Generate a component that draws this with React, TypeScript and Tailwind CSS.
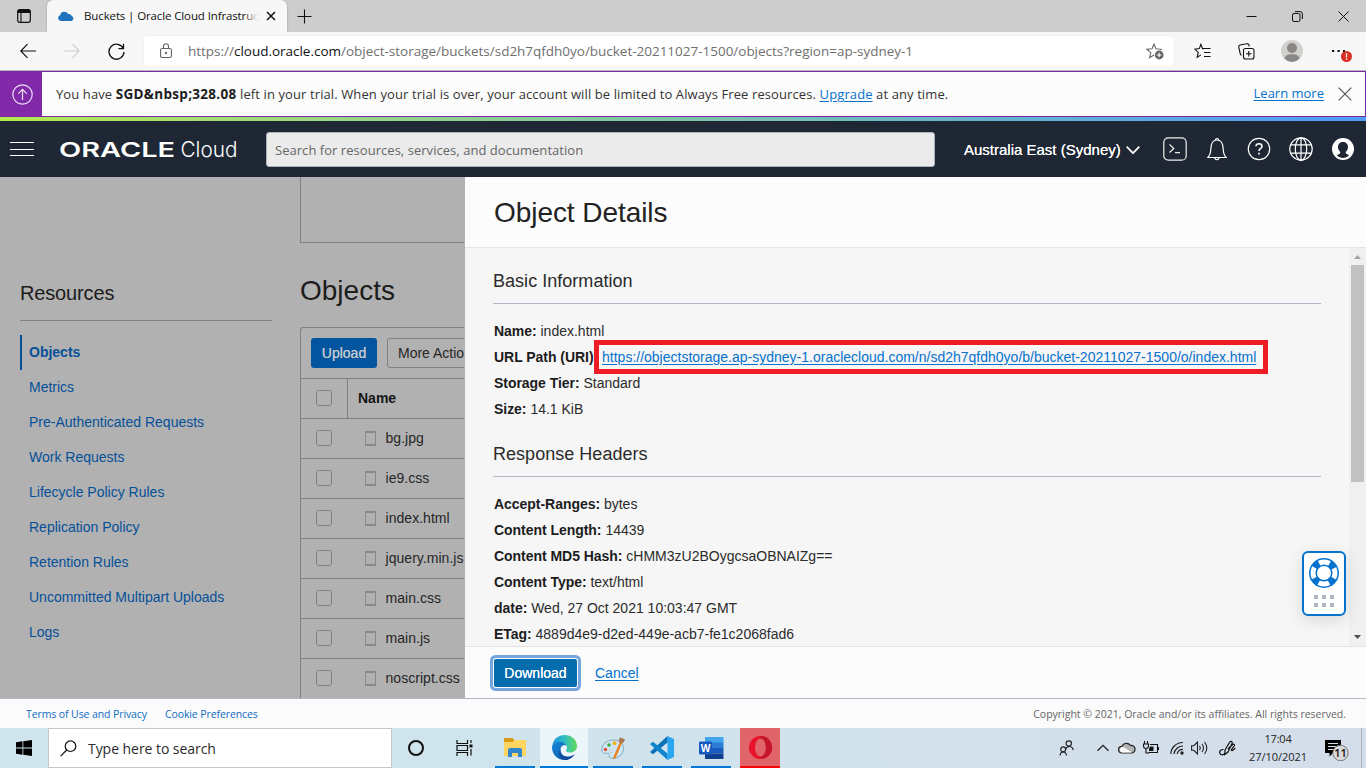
import React from 'react';

const ui = "font-['Open_Sans','Noto_Sans',sans-serif]";
const arial = "font-['Liberation_Sans',Arial,sans-serif]";

function TabStrip() {
  return (
    <div className={`flex h-8 shrink-0 items-center bg-[#cdcdcd] ${ui}`}>
      <svg className="ml-4 shrink-0" width="16" height="16" viewBox="0 0 16 16" fill="none">
        <rect x="1.7" y="1.7" width="12.6" height="12.6" rx="2" stroke="#111" strokeWidth="1.2" />
        <path d="M1.5 5V3.5a2 2 0 0 1 2-2h9a2 2 0 0 1 2 2V5z" fill="#111" />
        <path d="M5 5v9" stroke="#111" strokeWidth="1.1" />
      </svg>
      <div className="ml-[15px] flex h-8 w-60 items-center rounded-t-md bg-[#f7f7f7] pl-[11px] shadow-[0_0_2px_rgba(0,0,0,0.3)]">
        <svg width="16" height="10" viewBox="0 0 16 10" fill="#2273bd">
          <path d="M3 10a3 3 0 0 1-.6-5.9A3.6 3.6 0 0 1 6 .8 4.5 4.5 0 0 1 10.2 3 3 3 0 0 1 13.7 5 2.6 2.6 0 0 1 13.400 10z" />
        </svg>
        <div className="relative ml-[10px] h-4 w-[174px] whitespace-nowrap text-[11.5px] leading-4 tracking-[-0.12px] text-[#111]">
          Buckets | Oracle Cloud Infrastruc
          <div className="absolute top-0 right-0 h-4 w-[14px] bg-linear-to-r from-transparent to-[#f7f7f7]" />
        </div>
        <svg className="ml-[8px]" width="10" height="10" viewBox="0 0 10 10" stroke="#111" strokeWidth="1.5">
          <path d="M1 1l8 8M9 1L1 9" />
        </svg>
      </div>
      <svg className="ml-[10px]" width="15" height="15" viewBox="0 0 15 15" stroke="#111" strokeWidth="1.1">
        <path d="M7.500 .5v14M.5 7.500h14" />
      </svg>
      <div className="mr-[17px] ml-auto flex items-center gap-[35px]">
        <svg width="11" height="11" viewBox="0 0 11 11" stroke="#111">
          <path d="M.5 5.500h10" />
        </svg>
        <svg width="11" height="11" viewBox="0 0 11 11" stroke="#111" fill="none">
          <rect x=".5" y="2.500" width="7.500" height="8" rx="1.500" />
          <path d="M3 .6h5a2.400 2.400 0 0 1 2.400 2.400v5" />
        </svg>
        <svg width="11" height="11" viewBox="0 0 11 11" stroke="#111">
          <path d="M.5.5l10 10M10.500.5l-10 10" />
        </svg>
      </div>
    </div>
  );
}

const starPath = 'M8 1.200l2 4.600 5 .5-3.800 3.300 1.200 5L8 12l-4.400 2.600 1.200-5L1 6.300l5-.5z';

function AddressBar() {
  return (
    <div className={`flex h-[39px] shrink-0 items-center border-b border-[#b5b8b3] bg-[#f7f7f7] ${ui}`}>
      <svg className="ml-5" width="16" height="16" viewBox="0 0 16 16" stroke="#111" strokeWidth="1.200" fill="none">
        <path d="M16 8H.8M7.500 1.200L.8 8l6.700 6.800" />
      </svg>
      <svg className="ml-7" width="16" height="16" viewBox="0 0 16 16" stroke="#ccc" strokeWidth="1.100" fill="none">
        <path d="M0 8h15.200M8.500 1.200L15.200 8l-6.700 6.800" />
      </svg>
      <svg className="ml-7" width="17" height="17" viewBox="0 0 17 17" stroke="#111" strokeWidth="1.300" fill="none">
        <path d="M15.300 5.500A7.500 7.500 0 1 0 16 9M15.500.8v4.900h-5" />
      </svg>
      <div className="ml-[19px] flex h-[30px] w-[1030px] items-center rounded bg-white pl-4 shadow-[0_0_2px_rgba(0,0,0,0.08)]">
        <svg width="12" height="16" viewBox="0 0 12 16" stroke="#666" strokeWidth="1.100" fill="none">
          <rect x=".6" y="5.500" width="10.800" height="9" rx="1.500" />
          <path d="M3.500 5.500V3.200a2.500 2.500 0 0 1 5 0v2.300" />
          <circle cx="6" cy="10" r=".6" fill="#555" />
        </svg>
        <span className="ml-4 whitespace-nowrap text-[13.5px] tracking-[-0.015px] text-[#6f6f6f]">
          https://<span className="text-[#111]">cloud.oracle.com</span>/object-storage/buckets/sd2h7qfdh0yo/bucket-20211027-1500/objects?region=ap-sydney-1
        </span>
        <svg className="mr-[10px] ml-auto" width="18" height="17" viewBox="0 0 18 17" fill="none">
          <path d={starPath} stroke="#666" strokeWidth="1.100" />
          <circle cx="13.200" cy="12" r="5.200" fill="#fff" />
          <circle cx="13.200" cy="12" r="4.400" fill="#666" />
          <path d="M13.200 9.700v4.600M10.900 12h4.600" stroke="#fff" />
        </svg>
      </div>
      <svg className="ml-5" width="17" height="16" viewBox="0 0 17 16" stroke="#111" strokeWidth="1.100" fill="none">
        <path d="M10 5.600H8.500L6.900 1.300 5.300 5.600.8 6.100l3.400 3.300-1 5 3.700-2.500M8.500 5.500h8M10 9.500h6.500M10 13.500h6.500" />
      </svg>
      <svg className="ml-[27px]" width="17" height="17" viewBox="0 0 17 17" stroke="#111" strokeWidth="1.100" fill="none">
        <rect x="5.500" y="5.500" width="10.500" height="10.500" rx="2" />
        <path d="M10.750 8v5.500M8 10.750h5.500M3.600 12.200A2 2 0 0 1 2.300 11L.8 4.300A2 2 0 0 1 2.200 2L8.500.7A2 2 0 0 1 11 2.300l.3 1.200" />
      </svg>
      <svg className="ml-[26px]" width="22" height="22" viewBox="0 0 22 22">
        <circle cx="11" cy="11" r="11" fill="#d2d0cd" />
        <circle cx="11" cy="8" r="5" fill="#8a8886" />
        <path d="M3.600 18.500C4 15.500 7 14.300 11 14.300s7 1.200 7.400 4.200A11 11 0 0 1 11 22a11 11 0 0 1-7.400-3.500z" fill="#8a8886" />
      </svg>
      <svg className="ml-7" width="22" height="22" viewBox="0 0 22 22">
        <path d="M1 10h2.200v2H1zM6.500 10h2.200v2H6.500zM12 10h2v2h-2z" fill="#111" />
        <circle cx="15.500" cy="16.500" r="5.500" fill="#d93025" />
        <path d="M15.500 13.300v3.900M15.500 18.200v1.500" stroke="#fff" strokeWidth="1.300" />
      </svg>
    </div>
  );
}

function TrialBanner() {
  return (
    <div className={`flex h-[46px] shrink-0 items-center border border-l-0 border-[#7b2aa3] bg-[#fcfcfc] text-[13px] text-[#343434] ${ui}`}>
      <div className="flex h-full w-[42px] items-center justify-center bg-[#8129a8]">
        <svg className="ml-[2px]" width="21" height="21" viewBox="0 0 21 21" stroke="#efe0f5" strokeWidth="1.200" fill="none">
          <circle cx="10.500" cy="10.500" r="9.700" />
          <path d="M10.500 16V5.500M6.300 9.600l4.200-4.200 4.200 4.200" />
        </svg>
      </div>
      <p className="ml-[14px] leading-5 whitespace-nowrap tracking-[0.105px]">
        You have <b className="text-[13.500px] tracking-[0.3px] text-[#1c1c1c]">SGD&amp;nbsp;328.08</b> left in your trial. When your trial is over, your account will be limited to Always Free resources.{' '}
        <a className="text-[#0572ce] underline underline-offset-2">Upgrade</a> at any time.
      </p>
      <a className="ml-auto text-[#0572ce] underline underline-offset-2">Learn more</a>
      <svg className="mr-[13px] ml-[14px]" width="14" height="14" viewBox="0 0 14 14" stroke="#555" strokeWidth="1.200">
        <path d="M.7.7l12.600 12.600M13.300.7L.7 13.300" />
      </svg>
    </div>
  );
}

function CloudNav() {
  return (
    <div className="flex h-14 shrink-0 items-center bg-[#1e2733]">
      <svg className="ml-[10px] shrink-0" width="24" height="14" viewBox="0 0 24 14" stroke="#fff" strokeWidth="1">
        <path d="M0 .5h24M0 7.500h24M0 13.500h24" />
      </svg>
      <svg className="ml-[26px] shrink-0 overflow-visible" width="178" height="28" viewBox="0 0 178 28" fill="#fff">
        <text x="-1" y="21.500" fontFamily="Inter, sans-serif" fontSize="20.500" fontWeight="600" textLength="116" lengthAdjust="spacingAndGlyphs">ORACLE</text>
        <text x="120.500" y="21.500" fontFamily="Inter, sans-serif" fontSize="21.500" fontWeight="300" textLength="57" lengthAdjust="spacingAndGlyphs">Cloud</text>
      </svg>
      <div className={`ml-[28px] flex h-[35px] w-[669px] items-center rounded-[3px] border border-[#a9b2bd] bg-[#ebebeb] pt-[3px] pl-2 text-[13px] tracking-[0.04px] text-[#666] ${ui}`}>
        Search for resources, services, and documentation
      </div>
      <span className={`ml-[29px] w-[158px] pt-[2px] whitespace-nowrap text-[15px] text-white [text-shadow:0_0_0.6px_#fff] ${arial}`}>Australia East (Sydney)</span>
      <svg className="mt-[2px] ml-[4px]" width="14" height="8" viewBox="0 0 14 8" stroke="#fff" strokeWidth="1.700" fill="none">
        <path d="M.7.7L7 7.200 13.300.7" />
      </svg>
      <svg className="ml-[23px]" width="24" height="24" viewBox="0 0 24 24" stroke="#eee" strokeWidth="1.200" fill="none">
        <rect x=".8" y=".8" width="22.400" height="22.400" rx="4.500" />
        <path d="M6.500 7.500l4.300 4-4.300 4M12 15.700h5" />
      </svg>
      <svg className="ml-5" width="20" height="24" viewBox="0 0 20 24" stroke="#fff" strokeWidth="1.200" fill="none">
        <path d="M.8 20.500c2.500-2.300 2.800-4.500 3-8.500.2-5.500 2-9 6.200-9s6 3.500 6.200 9c.2 4 .5 6.200 3 8.500z" />
        <path d="M8.500 3a1.500 1.500 0 0 1 3 0M7.800 20.500a2.200 2.200 0 0 0 4.400 0" />
      </svg>
      <svg className="ml-5" width="24" height="24" viewBox="0 0 24 24" stroke="#fff" strokeWidth="1.200" fill="none">
        <circle cx="12" cy="12" r="10.700" />
        <path d="M9 9.300C9.100 7.500 10.400 6.800 12 6.800s3 .9 3 2.600c0 2-3 2.200-3 4.600" strokeWidth="1.600" />
        <path d="M12 15.700v1.800" strokeWidth="1.700" />
      </svg>
      <svg className="ml-[18px]" width="24" height="24" viewBox="0 0 24 24" stroke="#fff" strokeWidth="1.200" fill="none">
        <circle cx="12" cy="12" r="11.200" />
        <ellipse cx="12" cy="12" rx="5.700" ry="11.200" />
        <path d="M12 .8v22.400M1.700 7.800h20.600M1.700 16.200h20.600" />
      </svg>
      <svg className="ml-[19px]" width="22" height="22" viewBox="0 0 22 22">
        <circle cx="11" cy="11" r="11" fill="#fff" />
        <path d="M11 4c3 0 5 2.100 5 5 0 2-1 3.800-2.300 4.900-.2 1.900 1.600 2.100 3.400 3.300-1.700 1.900-3.700 2.700-6.100 2.700s-4.400-.8-6.100-2.700c1.800-1.200 3.600-1.400 3.400-3.300C7 12.800 6 11 6 9c0-2.900 2-5 5-5z" fill="#1e2733" />
      </svg>
    </div>
  );
}

const resources = ['Metrics', 'Pre-Authenticated Requests', 'Work Requests', 'Lifecycle Policy Rules', 'Replication Policy', 'Retention Rules', 'Uncommitted Multipart Uploads', 'Logs'];
const files = ['bg.jpg', 'ie9.css', 'index.html', 'jquery.min.js', 'main.css', 'main.js', 'noscript.css'];

function CheckBox() {
  return <span className="ml-[15px] size-4 shrink-0 rounded-[3px] border border-[#7c8186]" />;
}

function BucketPage() {
  return (
    <div className={`flex w-[465px] shrink-0 overflow-hidden bg-[#b1b1b1] text-sm ${arial}`}>
      <nav className="mt-[98px] ml-5 w-[252px] shrink-0 text-[#06509a]">
        <h2 className="h-[46px] border-b border-[#7c8186] pt-[6px] text-[20px] leading-[24px] tracking-[-0.15px] text-[#1c1c1c]">Resources</h2>
        <div className="mt-[14px] flex h-[35px] items-center border-l-2 border-[#06509a] pb-[2px] pl-[7px] font-bold">Objects</div>
        {resources.map((r) => (
          <div key={r} className="flex h-[35px] items-center pb-[2px] pl-[9px]">{r}</div>
        ))}
      </nav>
      <div className="ml-7 w-[164px] shrink-0 overflow-hidden">
        <div className="h-[66px] border-b border-l border-[#7c8186]" />
        <h1 className="mt-[28px] h-[56px] text-[28px] leading-[40px] text-[#1c1c1c]">Objects</h1>
        <div className="h-[380px] w-[300px] rounded-tl-[3px] border-t border-l border-[#7c8186] text-[#262626]">
          <div className="flex h-[51px] items-center border-b border-[#7c8186] pl-[10px]">
            <span className="flex h-[30px] w-[66px] items-center justify-center rounded-[3px] bg-[#03559f] text-[#c5c9cd] [text-shadow:0_0_0.5px_#c5c9cd]">Upload</span>
            <span className="ml-[10px] flex h-[30px] w-[150px] items-center rounded-[3px] border border-[#7c8186] pl-[10px]">More Actio</span>
          </div>
          <div className="flex h-10 items-center border-b border-[#7c8186] font-bold text-[#151515]">
            <span className="flex h-full w-[47px] shrink-0 items-center border-r border-[#7c8186] pb-px">
              <CheckBox />
            </span>
            <span className="pb-px pl-[10px]">Name</span>
          </div>
          {files.map((f) => (
            <div key={f} className="flex h-10 items-center border-b border-[#7c8186] pb-px">
              <CheckBox />
              <span className="ml-[33px] h-[15px] w-[11px] shrink-0 border border-t-2 border-b-2 border-[#898989]" />
              <span className="ml-[9.5px] whitespace-nowrap tracking-[0.04px]">{f}</span>
            </div>
          ))}
        </div>
      </div>
    </div>
  );
}

function Row({ label, children }: { label: string; children: React.ReactNode }) {
  return (
    <div className="h-[26px] leading-[26px] whitespace-nowrap">
      <b className="tracking-[-0.04px] text-[#1c1c1c]">{label}</b> {children}
    </div>
  );
}

function HelpWidget() {
  return (
    <div className="absolute top-[303px] left-[837px] flex h-[65px] w-[44px] flex-col items-center rounded-md border-2 border-[#0572ce] bg-white pt-[5px] shadow-[0_4px_16px_rgba(0,0,0,0.12)]">
      <svg width="30" height="30" viewBox="0 0 30 30" fill="none">
        <circle cx="15" cy="15" r="11" stroke="#0572ce" strokeWidth="7" strokeDasharray="6.400 10.879" strokeDashoffset="-5.440" />
        <circle cx="15" cy="15" r="14.200" stroke="#0572ce" strokeWidth="1.500" />
        <circle cx="15" cy="15" r="7.800" stroke="#0572ce" strokeWidth="1.500" />
      </svg>
      <div className="mt-[7px] grid grid-cols-3 gap-1">
        {[0, 1, 2, 3, 4, 5].map((i) => (
          <span key={i} className="size-1 bg-[#b1b7c4]" />
        ))}
      </div>
    </div>
  );
}

function DetailsPanel() {
  return (
    <div className={`flex flex-1 flex-col bg-[#fcfcfc] text-sm text-[#2b2b2b] ${arial}`}>
      <h1 className="h-[71px] shrink-0 border-b border-[#e4e4e4] pt-[16px] pl-[29px] text-[28px] leading-[40px] tracking-[-0.06px] text-[#222]">Object Details</h1>
      <div className="relative flex h-[398px] shrink-0 bg-[#f6f6f6]">
        <div className="w-[884px] overflow-hidden pt-[20px] pr-7 pl-[28px]">
          <h2 className="h-[36px] border-b border-[#b0b9c5] text-[18px] leading-[26px] tracking-[0.03px]">Basic Information</h2>
          <div className="pt-[14px] pl-px">
            <Row label="Name:">index.html</Row>
            <Row label="URL Path (URI):">
              <a className="text-[#0572ce] underline underline-offset-2">https://objectstorage.ap-sydney-1.oraclecloud.com/n/sd2h7qfdh0yo/b/bucket-20211027-1500/o/index.html</a>
            </Row>
            <Row label="Storage Tier:">Standard</Row>
            <Row label="Size:">14.1 KiB</Row>
          </div>
          <h2 className="mt-[19px] h-[36px] border-b border-[#b0b9c5] text-[18px] leading-[26px] tracking-[0.03px]">Response Headers</h2>
          <div className="pt-[14px] pl-px">
            <Row label="Accept-Ranges:">bytes</Row>
            <Row label="Content Length:">14439</Row>
            <Row label="Content MD5 Hash:">cHMM3zU2BOygcsaOBNAIZg==</Row>
            <Row label="Content Type:">text/html</Row>
            <Row label="date:">Wed, 27 Oct 2021 10:03:47 GMT</Row>
            <Row label="ETag:">4889d4e9-d2ed-449e-acb7-fe1c2068fad6</Row>
          </div>
        </div>
        <div className="flex w-[17px] flex-col items-center bg-[#f0f0f0]">
          <svg className="mt-[7px] shrink-0" width="7" height="4" viewBox="0 0 7 4" fill="#a3a3a3"><path d="M3.500 0L7 4H0z" /></svg>
          <div className="mt-[6px] h-[217px] w-[13px] bg-[#c1c1c1]" />
          <svg className="mt-auto mb-[7px] shrink-0" width="7" height="4" viewBox="0 0 7 4" fill="#4f4f4f"><path d="M3.500 4L7 0H0z" /></svg>
        </div>
        <div className="absolute top-[92px] left-[129px] h-[34px] w-[674px] border-[5px] border-[#ee1c24]" />
        <HelpWidget />
      </div>
      <div className="flex flex-1 items-center border-t border-[#e4e4e4] pl-[29px]">
        <span className="flex h-[28px] w-[83px] items-center justify-center rounded-[2px] bg-[#056cae] text-white [box-shadow:0_0_0_1px_#fff,0_0_0_4px_#75a6e0] [text-shadow:0_0_0.6px_#fff]">Download</span>
        <a className="ml-[18px] text-[#0572ce] underline underline-offset-2">Cancel</a>
      </div>
    </div>
  );
}

function SiteFooter() {
  return (
    <div className={`flex h-[30px] shrink-0 items-center border-t border-[#b0b9c5] bg-[#fbfbfb] pt-[2px] text-[10.5px] text-[#0f6cc4] ${ui}`}>
      <a className="ml-[26px] tracking-[-0.1px]">Terms of Use and Privacy</a>
      <a className="ml-[18px] tracking-[-0.1px]">Cookie Preferences</a>
      <span className="mr-5 ml-auto tracking-[-0.01px] text-[#666]">Copyright © 2021, Oracle and/or its affiliates. All rights reserved.</span>
    </div>
  );
}

function TaskButton({ children, className }: { children: React.ReactNode; className: string }) {
  return <div className={`flex h-10 items-center justify-center border-b-2 pt-[1px] ${className}`}>{children}</div>;
}

function TaskBar() {
  return (
    <div className={`flex h-10 shrink-0 items-center bg-linear-to-r from-[#cfe6ee] via-[#d0e3ec] to-[#d4ddea] ${ui}`}>
      <div className="flex w-12 justify-center">
        <svg width="16" height="16" viewBox="0 0 16 16" fill="#000">
          <path d="M0 2.200L6.500 1.300v6.300H0zM7.300 1.200L16 0v7.600H7.300zM0 8.400h6.500v6.300L0 13.800zM7.300 8.400H16V16l-8.700-1.200z" />
        </svg>
      </div>
      <div className="flex h-10 w-[344px] items-center border border-[#c6c6c6] bg-white pl-[11px] text-[14px] text-[#2b2b2b]">
        <svg width="17" height="17" viewBox="0 0 17 17" stroke="#111" strokeWidth="1.200" fill="none">
          <circle cx="10.500" cy="6.200" r="5.300" />
          <path d="M6.700 10L.6 16.200" />
        </svg>
        <span className="ml-[11px] tracking-[-0.05px]">Type here to search</span>
      </div>
      <div className="flex w-12 justify-center">
        <span className="size-4 rounded-full border-2 border-[#111]" />
      </div>
      <div className="flex w-12 justify-center">
        <svg width="17" height="16" viewBox="0 0 17 16" stroke="#111" strokeWidth="1.200" fill="none">
          <path d="M1 0v3.500h10.500V0M1 16v-3.500h10.500V16M1 5.500h10.500v5H1zM15 0v3M15 9v6.500" />
          <path d="M13.500 4.500h3v3h-3z" fill="#111" stroke="none" />
        </svg>
      </div>
      <TaskButton className="ml-[7px] w-10 border-[#0078d7]">
        <svg width="22" height="19" viewBox="0 0 22 19">
          <path d="M0 1a1 1 0 0 1 1-1h7.500l1.800 2H21a1 1 0 0 1 1 1v3H0z" fill="#d99a16" />
          <path d="M0 4h8.500l2-2H21a1 1 0 0 1 1 1v15H0z" fill="#ffd561" />
          <path d="M4 19v-7a2 2 0 0 1 2-2h10a2 2 0 0 1 2 2v7h-4v-4H8v4z" fill="#3187cd" />
        </svg>
      </TaskButton>
      <TaskButton className="ml-[5px] w-12 border-[#0078d7] bg-[#ecf5f9]">
        <svg width="25" height="25" viewBox="0 0 24 24">
          <defs>
            <linearGradient id="edgeTop" x1="0" y1="0.500" x2="1" y2="0.500">
              <stop offset="0" stopColor="#2390dc" />
              <stop offset=".5" stopColor="#2fc0c3" />
              <stop offset="1" stopColor="#62d957" />
            </linearGradient>
            <linearGradient id="edgeBottom" x1="0" y1="0" x2="1" y2="1">
              <stop offset="0" stopColor="#168bd9" />
              <stop offset="1" stopColor="#0c4da2" />
            </linearGradient>
          </defs>
          <path d="M.3 10C1.300 4 6 0 12 0c7 0 12 4.800 12 10.500 0 4-3 6.300-6.500 6.300-2.800 0-4-.9-4-1.700 0-.7.900-1.200.9-3 0-2.800-2.600-5-6-5C4.700 7 1.800 8 .3 10z" fill="url(#edgeTop)" />
          <path d="M0 12c0-3.500 3.500-5.600 7.500-5.600 3.200 0 5.700 1.600 6.500 4-.8-.8-2-1-3-.6-2.500 1-3.500 3.700-2.500 6.700 1.500 4.500 7.500 5.500 13.300 2.200C19.500 22 16 24 12 24 5 24 0 18.500 0 12z" fill="url(#edgeBottom)" />
          <path d="M8.300 13.500c-1.200 5 3 8.500 8 7.500 2-.4 4-1.300 5.500-2.300C19.600 22 16 24 12 24c-5-1.500-6.500-6.500-3.700-10.500z" fill="#10489a" />
        </svg>
      </TaskButton>
      <TaskButton className="ml-[5px] w-10 border-[#0078d7]">
        <svg width="25" height="24" viewBox="0 0 25 24">
          <path d="M12 4C5.500 4 .8 8.500.8 13.500c0 3.400 2.500 4.400 4.700 3.700 2-.6 3 .4 2.700 2.300-.3 2 1.600 3.400 5 2.900 5-.7 9.300-4.500 9.300-10C22.500 7 18 4 12 4z" fill="#cfe6f5" stroke="#86a8c0" />
          <circle cx="4.500" cy="13.500" r="1.700" fill="#e04b3a" />
          <circle cx="8" cy="9" r="1.800" fill="#3fae49" />
          <circle cx="13.500" cy="7.300" r="2" fill="#f5b21c" />
          <circle cx="10" cy="15.500" r="1.300" fill="#fff" stroke="#86a8c0" strokeWidth=".6" />
          <path d="M13 22.500l7-16" stroke="#e8862a" strokeWidth="2.600" />
          <path d="M18.300 6.500c-1-2.300 0-4.500 1.500-5.500 0 1.500 1 1 2 1.500l2.200.5c-.5 2.300-1.500 4-3.500 4.800z" fill="#a97a55" />
        </svg>
      </TaskButton>
      <TaskButton className="ml-[9px] w-10 border-[#0078d7]">
        <svg width="24" height="24" viewBox="0 0 24 24">
          <path d="M17.500 0L24 3v18l-6.500 3z" fill="#2aa7f0" />
          <path d="M17.500 0v6.500L3 18.200 0 15.900z" fill="#0a72b8" />
          <path d="M17.500 24v-6.500L3 5.800 0 8.100z" fill="#0e85cf" />
        </svg>
      </TaskButton>
      <TaskButton className="ml-[9px] w-10 border-[#0078d7]">
        <svg width="25" height="22" viewBox="0 0 25 22">
          <path d="M6 0h18.500v6H6z" fill="#41a5ee" />
          <path d="M6 5.500h18.500V11H6z" fill="#2b7cd3" />
          <path d="M6 11h18.500v5.500H6z" fill="#185abd" />
          <path d="M6 16.500h18.500V22H6z" fill="#103f91" />
          <rect y="4.500" width="13" height="13" rx="1" fill="#185abd" />
          <text x="6.500" y="14.500" textAnchor="middle" fontFamily="Open Sans, sans-serif" fontSize="10" fontWeight="700" fill="#fff">W</text>
        </svg>
      </TaskButton>
      <TaskButton className="ml-[9px] w-10 border-[#f50505] bg-[#e06469]">
        <svg width="23" height="23" viewBox="0 0 23 23">
          <path fillRule="evenodd" d="M11.500 0a11.500 11.500 0 1 0 0 23 11.500 11.500 0 0 0 0-23zm0 2.500c3.300 0 5.400 4 5.400 9s-2.100 9-5.400 9-5.400-4-5.400-9 2.100-9 5.400-9z" fill="#e8132a" />
          <path d="M11.500 0c6.400 0 11.500 5.100 11.500 11.500S17.900 23 11.500 23v-2.500c3.300 0 5.400-4 5.400-9s-2.100-9-5.400-9z" fill="#c4162a" />
        </svg>
      </TaskButton>

      <svg className="ml-auto shrink-0" width="15" height="16" viewBox="0 0 15 16" stroke="#222" strokeWidth="1.200" fill="none">
        <circle cx="9.800" cy="3.500" r="2.700" />
        <path d="M6.300 9.500C7 7.500 8.500 6.500 10.300 6.500c2 0 3.500 1.300 4 3.500M1 15.500c.3-2.300 1.500-3.500 3.200-3.500s3 1.200 3.300 3.500" />
        <circle cx="4.200" cy="9.300" r="2.500" />
      </svg>
      <svg className="ml-[23px] shrink-0" width="12" height="8" viewBox="0 0 12 8" stroke="#222" strokeWidth="1.300" fill="none"><path d="M.5 6.800L6 1.300l5.500 5.500" /></svg>
      <svg className="ml-[9px] shrink-0" width="18" height="12" viewBox="0 0 18 12">
        <path d="M4 11A3.300 3.300 0 0 1 3.800 4.400 5 5 0 0 1 12.500 3.500 3.800 3.800 0 0 1 14 11z" fill="#b5b5b5" stroke="#222" strokeWidth="1.200" />
        <path d="M4 10.400a2.700 2.700 0 0 1 1.500-5.200l8.500 5.200z" fill="#fff" />
      </svg>
      <svg className="ml-[7px] shrink-0" width="16" height="14" viewBox="0 0 16 14" fill="none" stroke="#111" strokeWidth="1.100">
        <path d="M1.500 0v3M4.500 0v3M.5 3h5v2a2.500 2.500 0 0 1-5 0zM3 7.500V12h3M7 3.500h7.500v8H5.500M15.500 6v3" />
        <path d="M7 5.500h3.500v4.500H6V8z" fill="#111" stroke="none" />
      </svg>
      <svg className="ml-[11px] shrink-0" width="14" height="14" viewBox="0 0 14 14" fill="none" stroke="#222" strokeWidth="1.200">
        <path d="M.8 13C1 6.500 6.500 1.500 13 1.500M4 13c.5-4.500 4.500-8 9-8M7.200 13c.5-2.800 3-4.700 5.800-4.700" />
        <circle cx="12" cy="12" r="1.700" fill="#222" stroke="none" />
      </svg>
      <svg className="ml-[7px] shrink-0" width="17" height="14" viewBox="0 0 17 14" fill="none" stroke="#222" strokeWidth="1.100">
        <path d="M.6 4.700h2.200L6.500 1v12L2.800 9.300H.6zM8.500 5c.9 1.200.9 2.800 0 4M11 3c1.800 2.400 1.800 5.600 0 8M13.500 1c2.800 3.600 2.800 8.400 0 12" />
      </svg>
      <svg className="ml-[11px] shrink-0" width="17" height="16" viewBox="0 0 17 16" fill="none" stroke="#111" strokeWidth="1.200">
        <path d="M4.500 9.500C1.500 9.500 0 11.500 1 13.500s4 1.800 5-.5M6 10L10.800 2c.8-1.400 3-.2 2.300 1.300L9 12l-3.200 2.500zM9 9l4.500-4.500c1-1 2.500 0 1.700 1.300L12.500 9.500c-.5 1 .5 1.500 1.500.5l2.300-1.800" />
      </svg>
      <div className="ml-[9px] w-[66px] shrink-0 text-center text-[11px] leading-[18px] whitespace-nowrap text-[#222]">
        <div className="tracking-[-0.2px]">17:04</div>
        <div className="tracking-[-0.02px]">27/10/2021</div>
      </div>
      <svg className="ml-[14px] shrink-0" width="26" height="26" viewBox="0 0 26 26">
        <path d="M0 5h16v13H8l-3.500 3.500V18H0z" fill="#000" />
        <path d="M3 8.500h10M3 11.500h10M3 14.500h7" stroke="#d4ddea" strokeWidth="1.100" />
        <circle cx="15.500" cy="18" r="7.700" fill="#d9d9d9" stroke="#777" strokeWidth="1" />
        <text x="15.500" y="22" textAnchor="middle" fontFamily="Open Sans, sans-serif" fontSize="11" fontWeight="600" fill="#111">11</text>
      </svg>
      <div className="ml-[10px] h-10 w-[5px] shrink-0 border-l border-[#a9b1bd]" />
    </div>
  );
}

export default function App() {
  return (
    <div className="flex h-[768px] w-[1366px] flex-col overflow-hidden bg-white">
      <TabStrip />
      <AddressBar />
      <TrialBanner />
      <div className="h-1 shrink-0 bg-linear-to-r from-[#b4e94b] via-[#7ec3a8] to-[#4f9bf8]" />
      <CloudNav />
      <div className="flex h-[521px] shrink-0">
        <BucketPage />
        <DetailsPanel />
      </div>
      <SiteFooter />
      <TaskBar />
    </div>
  );
}
